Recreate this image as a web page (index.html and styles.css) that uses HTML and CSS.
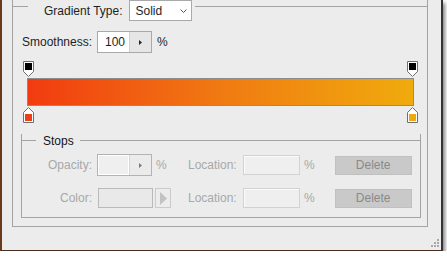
FILE: index.html
```html
<!DOCTYPE html>
<html>
<head>
    <title>Gradient Editor</title>
    <link rel="stylesheet" href="styles.css">
</head>
<body>
    <div class="window">
        <div class="frame">
            <div class="frame-head">
                <span class="rule rule-start"></span>
                <span class="head-label">Gradient Type:</span>
                <div class="select">
                    <span>Solid</span>
                    <svg width="7" height="4" viewBox="0 0 7 4"><polyline points="0.5,0.5 3.5,3.5 6.5,0.5" fill="none" stroke="#555" stroke-width="1"/></svg>
                </div>
                <span class="rule rule-fill"></span>
            </div>

            <div class="smooth-row">
                <span class="label">Smoothness:</span>
                <div class="spin">
                    <span class="spin-value">100</span>
                    <span class="spin-btn"><svg width="3" height="5" viewBox="0 0 3 5"><path d="M0 0L3 2.5L0 5Z" fill="#222"/></svg></span>
                </div>
                <span class="unit">%</span>
            </div>

            <div class="ramp">
                <div class="marker-row">
                    <svg class="marker" width="11" height="17" viewBox="0 0 11 17"><path d="M0.5 0.5H10.5V10.5L5.5 15.5L0.5 10.5Z" fill="#fff" stroke="#6f6f6f"/><rect x="2" y="2" width="7" height="7" fill="#000"/></svg>
                    <svg class="marker" width="11" height="17" viewBox="0 0 11 17"><path d="M0.5 0.5H10.5V10.5L5.5 15.5L0.5 10.5Z" fill="#fff" stroke="#6f6f6f"/><rect x="2" y="2" width="7" height="7" fill="#000"/></svg>
                </div>
                <div class="ramp-bar"></div>
                <div class="marker-row">
                    <svg class="marker" width="11" height="17" viewBox="0 0 11 17"><path d="M0.5 16.5H10.5V6.5L5.5 1.5L0.5 6.5Z" fill="#fff" stroke="#6f6f6f"/><rect x="2" y="8" width="7" height="7" fill="#ea4119"/></svg>
                    <svg class="marker" width="11" height="17" viewBox="0 0 11 17"><path d="M0.5 16.5H10.5V6.5L5.5 1.5L0.5 6.5Z" fill="#fff" stroke="#6f6f6f"/><rect x="2" y="8" width="7" height="7" fill="#f0a80f"/></svg>
                </div>
            </div>

            <div class="group">
                <div class="group-head">
                    <span class="rule rule-short"></span>
                    <span class="group-title">Stops</span>
                    <span class="rule rule-fill"></span>
                </div>

                <div class="stop-row">
                    <div class="cell-a">
                        <span class="label dim">Opacity:</span>
                        <div class="spin spin-off">
                            <span class="spin-value"></span>
                            <span class="spin-btn"><svg width="3" height="5" viewBox="0 0 3 5"><path d="M0 0L3 2.5L0 5Z" fill="#7a7a7a"/></svg></span>
                        </div>
                        <span class="unit dim">%</span>
                    </div>
                    <span class="loc-label dim">Location:</span>
                    <span class="field"></span>
                    <span class="unit dim">%</span>
                    <span class="btn-delete">Delete</span>
                </div>

                <div class="stop-row row-gap">
                    <div class="cell-a">
                        <span class="label dim">Color:</span>
                        <span class="swatch"></span>
                        <span class="swatch-btn"><svg width="7" height="13" viewBox="0 0 7 13"><path d="M0 0L7 6.5L0 13Z" fill="#c2c2c2"/></svg></span>
                    </div>
                    <span class="loc-label dim">Location:</span>
                    <span class="field"></span>
                    <span class="unit dim">%</span>
                    <span class="btn-delete">Delete</span>
                </div>
            </div>
        </div>

        <div class="footer">
            <svg width="8" height="8" viewBox="0 0 8 8" fill="#a9a9a9">
                <rect x="6" y="0" width="2" height="2"/>
                <rect x="3" y="3" width="2" height="2"/>
                <rect x="6" y="3" width="2" height="2"/>
                <rect x="0" y="6" width="2" height="2"/>
                <rect x="3" y="6" width="2" height="2"/>
                <rect x="6" y="6" width="2" height="2"/>
            </svg>
        </div>
    </div>
</body>
</html>
```

FILE: styles.css
```css
body {
    margin: 0;
    background: #fff;
    font-family: "Liberation Sans", Arial, sans-serif;
    font-size: 12px;
    color: #1e1e1e;
}
.window {
    box-sizing: border-box;
    width: 443px;
    height: 251px;
    display: flex;
    flex-direction: column;
    padding: 0 13px 0 10px;
    background: #ececec;
    border-left: 2px solid #6a3a1c;
    border-right: 2px solid #343434;
    border-bottom: 1px solid #4a2e22;
    box-shadow: 2px 3px 4px rgba(0, 0, 0, 0.5);
}
.frame {
    border: 1px solid #a3a3a3;
    border-top: 0;
    padding-bottom: 8px;
}
.rule {
    height: 0;
    border-top: 1px solid #a3a3a3;
}
.frame-head {
    display: flex;
    align-items: center;
    height: 21px;
    margin: 0 -1px;
}
.frame-head .rule {
    align-self: flex-start;
    margin-top: 6px;
}
.rule-start {
    width: 16px;
}
.rule-fill {
    flex: 1;
    margin-left: 3px;
}
.head-label {
    margin-left: 16px;
}
.select {
    box-sizing: border-box;
    width: 63px;
    height: 21px;
    margin-left: 6px;
    padding: 0 4px 0 6px;
    display: flex;
    align-items: center;
    justify-content: space-between;
    background: #fff;
    border: 1px solid #a9a9a9;
}
.smooth-row {
    display: flex;
    align-items: center;
    height: 22px;
    margin: 10px 0 0 9px;
}
.label {
    white-space: nowrap;
}
.spin {
    box-sizing: border-box;
    display: flex;
    width: 55px;
    height: 22px;
    margin-left: 5px;
    border: 1px solid #a9a9a9;
}
.spin-value {
    width: 31px;
    padding-right: 4px;
    box-sizing: border-box;
    text-align: right;
    line-height: 20px;
    background: #fff;
}
.spin-btn {
    flex: 1;
    display: flex;
    align-items: center;
    justify-content: center;
    background: #e6e6e6;
    border-left: 1px solid #cfcfcf;
}
.unit {
    margin-left: 5px;
}
.ramp {
    width: 395px;
    margin: 8px 0 0 10px;
}
.marker-row {
    display: flex;
    justify-content: space-between;
    height: 17px;
}
.marker {
    display: block;
}
.ramp-bar {
    box-sizing: border-box;
    height: 28px;
    margin: 0 4px;
    border: 1px solid #8c8c8c;
    background: linear-gradient(to right, #f23b10, #f07a12 50%, #f0ab0d);
}
.group {
    margin: 11px 6px 0 8px;
    padding-bottom: 8px;
    border: 1px solid #a3a3a3;
    border-top: 0;
}
.group-head {
    display: flex;
    align-items: center;
    height: 13px;
    margin: 0 -1px;
}
.rule-short {
    width: 15px;
}
.group-title {
    padding: 0 6px 0 7px;
    color: #151515;
}
.group-head .rule-fill {
    margin-left: 0;
}
.stop-row {
    display: flex;
    align-items: center;
    height: 22px;
    margin-top: 7px;
}
.row-gap {
    margin-top: 11px;
}
.cell-a {
    display: flex;
    align-items: center;
    width: 166px;
}
.cell-a .label {
    width: 70px;
    text-align: right;
}
.dim {
    color: #a8a8a8;
}
.cell-a .unit {
    margin-left: 4px;
}
.spin-off {
    border-color: #b3b3b3;
}
.spin-off .spin-value {
    background: #efefef;
    border: 1px solid #fff;
}
.spin-off .spin-btn {
    background: #ebebeb;
    border-left-color: #d6d6d6;
}
.swatch {
    box-sizing: border-box;
    width: 55px;
    height: 20px;
    margin-left: 6px;
    background: #e9e9e9;
    border: 1px solid #bababa;
}
.swatch-btn {
    box-sizing: border-box;
    width: 16px;
    height: 20px;
    margin-left: 2px;
    display: flex;
    align-items: center;
    justify-content: center;
    background: #ececec;
    border: 1px solid #cbcbcb;
}
.loc-label {
    width: 50px;
}
.field {
    box-sizing: border-box;
    width: 57px;
    height: 20px;
    margin-left: 5px;
    background: #efefef;
    border: 1px solid #d2d2d2;
    box-shadow: inset 1px 1px 0 #fafafa;
}
.field + .unit {
    margin-left: 4px;
}
.btn-delete {
    box-sizing: border-box;
    width: 77px;
    height: 19px;
    margin-left: 20px;
    line-height: 17px;
    text-align: center;
    color: #8a8a8a;
    background: #c9c9c9;
    border: 1px solid #c0c0c0;
}
.footer {
    flex: 1;
    display: flex;
    justify-content: flex-end;
    align-items: flex-end;
    margin-right: -11px;
    padding-bottom: 3px;
}
```
